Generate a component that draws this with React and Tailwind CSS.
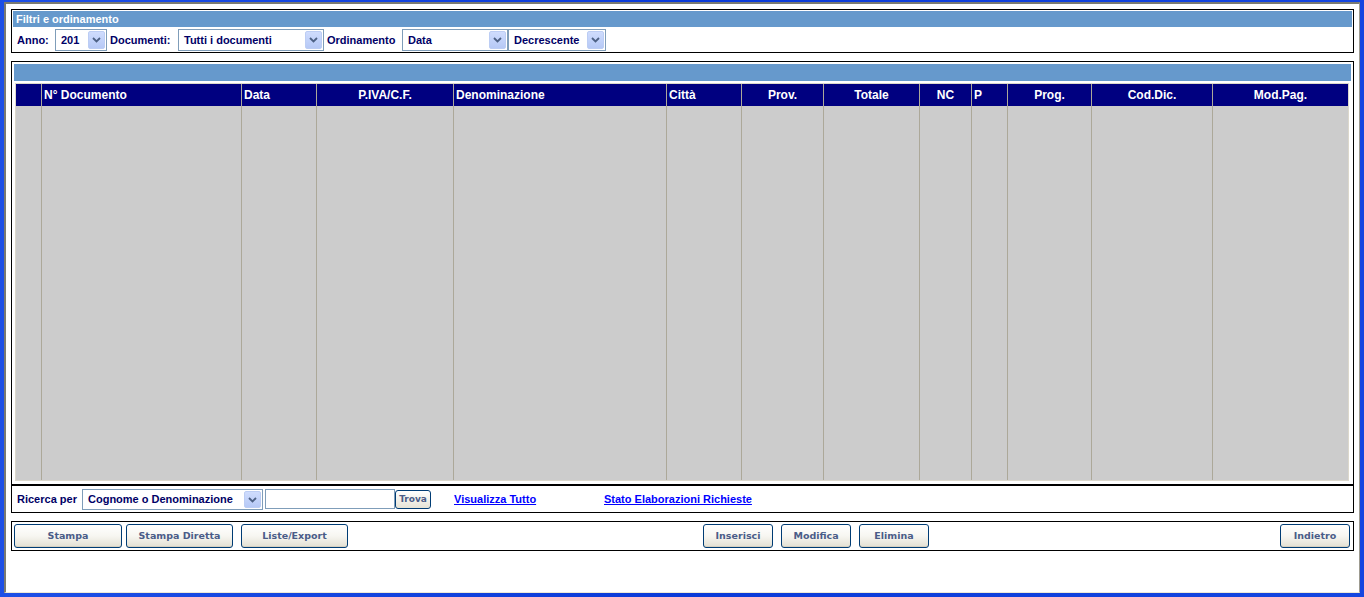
import { useState } from 'react';

const FONT = { fontFamily: '"Liberation Sans", Arial, sans-serif' };
const BTN_FONT = { fontFamily: '"DejaVu Sans", Verdana, sans-serif' };

const COLS = [
  { w: 26, label: '', align: 'left' },
  { w: 200, label: 'N° Documento', align: 'left' },
  { w: 75, label: 'Data', align: 'left' },
  { w: 137, label: 'P.IVA/C.F.', align: 'center' },
  { w: 213, label: 'Denominazione', align: 'left' },
  { w: 75, label: 'Città', align: 'left' },
  { w: 82, label: 'Prov.', align: 'center' },
  { w: 96, label: 'Totale', align: 'center' },
  { w: 52, label: 'NC', align: 'center' },
  { w: 36, label: 'P', align: 'left' },
  { w: 84, label: 'Prog.', align: 'center' },
  { w: 121, label: 'Cod.Dic.', align: 'center' },
  { w: 136, label: 'Mod.Pag.', align: 'center' },
];

function Chevron() {
  return (
    <svg width="9" height="6" viewBox="0 0 9 6">
      <path d="M1 1 L4.5 4.5 L8 1" fill="none" stroke="#4d6185" strokeWidth="1.8" />
    </svg>
  );
}

// XP-style combo box
function Select({ value, width, height = 'h-[22px]' }) {
  return (
    <div
      className={`${width} ${height} border border-[#7f9db9] bg-white flex items-center shrink-0`}
    >
      <span className="flex-1 pl-[5px] text-[11px] font-bold text-[#000066] whitespace-nowrap overflow-hidden">
        {value}
      </span>
      <div className="w-[17px] h-[calc(100%-2px)] mr-[1px] rounded-[2px] bg-gradient-to-b from-[#cfdcfd] to-[#b6c9f6] border border-[#bccdf4] flex items-center justify-center">
        <Chevron />
      </div>
    </div>
  );
}

function Button({ children, width }) {
  return (
    <button
      style={BTN_FONT}
      className={`${width} h-[24px] shrink-0 rounded-[3px] border border-[#003c74] bg-gradient-to-b from-white via-[#f7f6f1] to-[#e3e0d3] text-[9.5px] font-bold text-[#4a5c88] shadow-[inset_0_-1px_0_#d6d0c0]`}
    >
      {children}
    </button>
  );
}

export default function App() {
  const [search, setSearch] = useState('');

  return (
    <div
      style={FONT}
      className="w-[1364px] h-[597px] bg-gradient-to-r from-[#1d4fe6] via-[#0a3ad8] to-[#1446e0] pl-[4px] pt-[2px] pr-[4px] pb-[4px]"
    >
      <div className="h-full bg-white border-l-2 border-t-2 border-[#7a7a72] border-r border-b border-r-[#9d9b90] border-b-[#ece9d8] pl-[5px] pt-[5px] pr-[5px]">
        {/* Filtri e ordinamento */}
        <div className="border border-black p-[1px]">
          <div className="h-[16px] bg-[#6699cc] text-white text-[11px] font-bold leading-[16px] pl-[3px]">
            Filtri e ordinamento
          </div>
          <div className="h-[24px] pt-[2px] pl-[4px] flex items-start text-[11px] font-bold text-[#000066]">
            <span className="w-[38px] leading-[22px]">Anno:</span>
            <Select value="201" width="w-[52px]" />
            <span className="w-[71px] pl-[3px] leading-[22px]">Documenti:</span>
            <Select value="Tutti i documenti" width="w-[146px]" />
            <span className="w-[78px] pl-[3px] leading-[22px]">Ordinamento</span>
            <Select value="Data" width="w-[106px]" />
            <Select value="Decrescente" width="w-[98px]" />
          </div>
        </div>

        {/* Elenco documenti */}
        <div className="mt-[8px] border border-black border-b-2 pt-[2px] pl-[2px] pr-[2px] pb-[3px]">
          <div className="h-[17px] bg-[#6699cc]" />
          <div className="mt-[2px] ml-[1px] mr-[2px] h-[398px] border border-[#dcd8cc] flex">
            {COLS.map((c, i) => (
              <div
                key={i}
                style={{ width: c.w - (i === 0 ? 1 : 0) }}
                className={`shrink-0 flex flex-col ${i > 0 ? 'border-l border-[#aca899]' : ''}`}
              >
                <div
                  className={`h-[22px] bg-[#000080] text-white text-[12px] font-bold leading-[22px] whitespace-nowrap ${
                    c.align === 'center' ? 'text-center' : 'text-left pl-[2px]'
                  }`}
                >
                  {c.label}
                </div>
                <div className="flex-1 bg-[#cccccc]" />
              </div>
            ))}
          </div>
        </div>

        {/* Ricerca */}
        <div className="border-x border-b border-black h-[27px] pt-[3px] pl-[5px] flex items-start text-[11px] font-bold">
          <span className="w-[65px] leading-[21px] text-[#000066]">Ricerca per</span>
          <Select value="Cognome o Denominazione" width="w-[181px]" height="h-[21px]" />
          <input
            value={search}
            onChange={(e) => setSearch(e.target.value)}
            className="ml-[2px] w-[130px] h-[20px] border border-[#7f9db9] bg-white outline-none"
          />
          <button
            style={BTN_FONT}
            className="w-[36px] h-[19px] mt-[1px] rounded-[3px] border border-[#003c74] bg-gradient-to-b from-white to-[#e6e3d6] text-[9px] font-bold text-[#4a5c88]"
          >
            Trova
          </button>
          <a href="#" className="ml-[23px] w-[150px] leading-[21px] text-[#0000ff] underline">
            Visualizza Tutto
          </a>
          <a href="#" className="leading-[21px] text-[#0000ff] underline">
            Stato Elaborazioni Richieste
          </a>
        </div>

        {/* Pulsanti */}
        <div className="mt-[8px] border border-black py-[2px] pl-[2px] pr-[3px] flex items-start">
          <div className="flex">
            <Button width="w-[108px]">Stampa</Button>
          </div>
          <div className="ml-[4px] flex">
            <Button width="w-[107px]">Stampa Diretta</Button>
          </div>
          <div className="ml-[8px] flex">
            <Button width="w-[107px]">Liste/Export</Button>
          </div>
          <div className="ml-[355px] flex gap-[8px]">
            <Button width="w-[70px]">Inserisci</Button>
            <Button width="w-[70px]">Modifica</Button>
            <Button width="w-[70px]">Elimina</Button>
          </div>
          <div className="ml-auto flex">
            <Button width="w-[70px]">Indietro</Button>
          </div>
        </div>
      </div>
    </div>
  );
}
